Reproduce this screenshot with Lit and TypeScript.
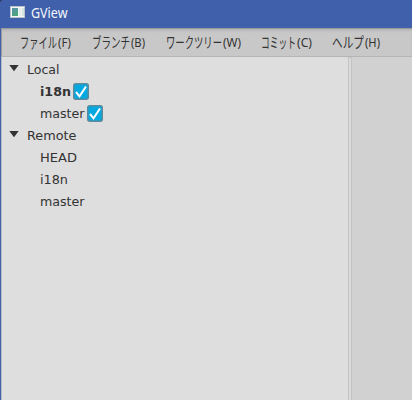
import { LitElement, html, css } from "lit";
import { customElement } from "lit/decorators.js";

interface Label { text: string; width: number }
interface Menu { name: Label; key: Label; gap: number }
interface Row { label: Label; depth: number; bold?: boolean; checked?: boolean }

const menus: Menu[] = [
  { name: { text: "ファイル", width: 37 }, key: { text: "(F)", width: 13 }, gap: 21 },
  { name: { text: "ブランチ", width: 38 }, key: { text: "(B)", width: 14 }, gap: 21 },
  { name: { text: "ワークツリー", width: 56 }, key: { text: "(W)", width: 18 }, gap: 20 },
  { name: { text: "コミット", width: 35 }, key: { text: "(C)", width: 15 }, gap: 20 },
  { name: { text: "ヘルプ", width: 32 }, key: { text: "(H)", width: 15 }, gap: 0 },
];

const rows: Row[] = [
  { label: { text: "Local", width: 32.5 }, depth: 0 },
  { label: { text: "i18n", width: 31 }, depth: 1, bold: true, checked: true },
  { label: { text: "master", width: 44.5 }, depth: 1, checked: true },
  { label: { text: "Remote", width: 49.5 }, depth: 0 },
  { label: { text: "HEAD", width: 37 }, depth: 1 },
  { label: { text: "i18n", width: 28 }, depth: 1 },
  { label: { text: "master", width: 44.5 }, depth: 1 },
];

const fit = (l: Label, cls: string, baseline: number) => html`
  <svg class=${cls} width=${l.width} height="22">
    <text x="0" y=${baseline} textLength=${l.width} lengthAdjust="spacingAndGlyphs">${l.text}</text>
  </svg>`;

@customElement("app-root")
export class AppRoot extends LitElement {
  static styles = css`
    :host {
      display: flex; flex-direction: column; box-sizing: border-box;
      width: 412px; height: 400px; overflow: hidden; background: #dedede;
    }
    svg { display: block; flex: none; overflow: visible; }
    .title {
      flex: none; height: 28px; box-sizing: border-box; display: flex;
      padding: 2px 0 0 10px; gap: 5px; background: #4060ab;
      border-top-left-radius: 3px; box-shadow: 0 0 0 4px #2b3243;
    }
    .appicon { margin-top: 4px; }
    .caption { font: 13.5px "Noto Sans", sans-serif; fill: #f4f6fb; }
    .window {
      flex: 1; display: flex; flex-direction: column; min-height: 0;
      border-left: 1px solid #4060ab;
    }
    .menubar {
      flex: none; height: 29px; box-sizing: border-box; display: flex;
      padding: 3px 0 0 19px; background: #c8c8c8;
      border-bottom: 1px solid #b5b5b5;
      box-shadow: inset 1px 1px 0 #9b9b9f, inset 0 3px 3px -1px #aaa;
    }
    .menu { display: flex; gap: 1px; }
    .kana { font: 14.5px "Noto Sans CJK JP", sans-serif; fill: #333; }
    .key { font: 12.5px "Noto Sans", sans-serif; fill: #333; }
    .body { flex: 1; display: flex; min-height: 0; }
    .tree { width: 347px; box-sizing: border-box; padding-top: 1px; border-left: 1px solid #b9bdc6; background: #dedede; }
    .row { display: flex; height: 22px; padding-left: 7px; }
    .child { padding-left: 38px; }
    .arrow { margin: 7px 8px 0 0; }
    .text { font: 13px "DejaVu Sans", sans-serif; fill: #333; }
    .bold { font-weight: bold; }
    .check { margin: 3px 0 0 2px; }
    .divider {
      width: 4px; box-sizing: border-box; background: #dadada;
      border: 1px solid #c3c3c3; border-bottom: 0;
    }
    .pane { flex: 1; background: #d1d1d1; }
  `;

  render() {
    return html`
      <div class="title">
        <svg class="appicon" width="16" height="14" viewBox="0 0 16 14">
          <defs>
            <linearGradient id="g" x2="0.6" y2="1">
              <stop offset="0" stop-color="#5b8fae" /><stop offset="1" stop-color="#4aa67a" />
            </linearGradient>
          </defs>
          <rect x="0.5" y="0.5" width="14" height="11" fill="#f4f6f5" stroke="#b9c3cb" />
          <rect x="2" y="2" width="6" height="8" fill="url(#g)" />
          <rect x="9" y="2" width="2" height="8" fill="#e4eceb" />
          <rect x="12" y="2" width="2" height="8" fill="#d3e5dd" />
        </svg>
        ${fit({ text: "GView", width: 36.5 }, "caption", 16)}
      </div>
      <div class="window">
        <div class="menubar">
          ${menus.map((m) => html`
            <div class="menu" style="margin-right:${m.gap}px">
              ${fit(m.name, "kana", 16.5)}${fit(m.key, "key", 16)}
            </div>`)}
        </div>
        <div class="body">
          <div class="tree">
            ${rows.map((r) => html`
              <div class="row ${r.depth ? "child" : ""}">
                ${r.depth ? "" : html`
                  <svg class="arrow" width="10" height="7" viewBox="0 0 10 7">
                    <path d="M0.3 0H9.7L5 6.3Z" fill="#333" />
                  </svg>`}
                ${fit(r.label, r.bold ? "text bold" : "text", 16)}
                ${r.checked ? html`
                  <svg class="check" width="16" height="17" viewBox="0 0 16 17">
                    <rect x="0.75" y="0.75" width="14.5" height="15.5" rx="2" fill="#03a9e0" stroke="#5c8a9c" stroke-width="1.5" />
                    <path d="M3 9L6.5 13.3L13 3.5" fill="none" stroke="#fff" stroke-width="2" />
                  </svg>` : ""}
              </div>`)}
          </div>
          <div class="divider"></div>
          <div class="pane"></div>
        </div>
      </div>`;
  }
}
